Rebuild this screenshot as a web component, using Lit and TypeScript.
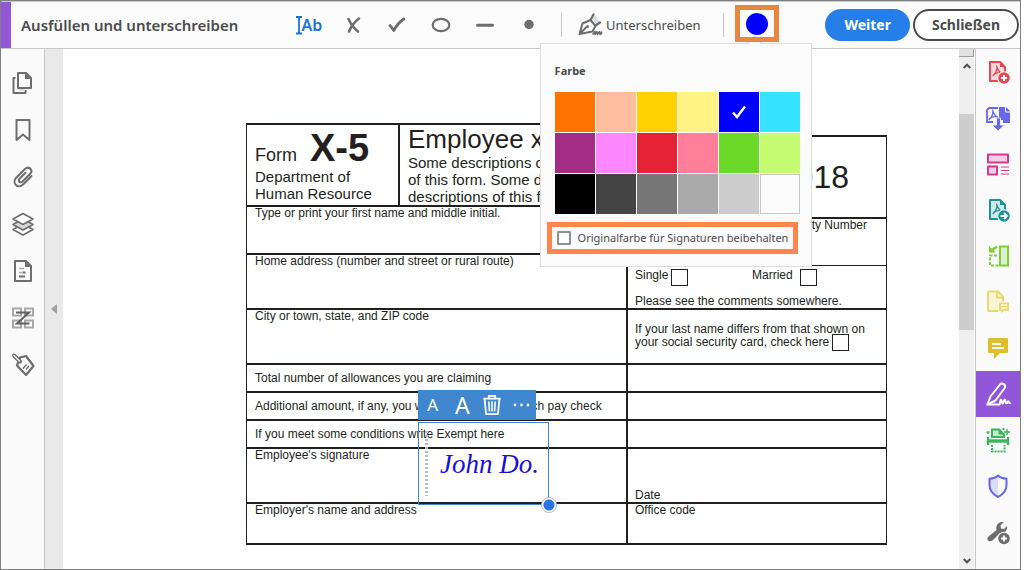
import { LitElement, html, css, svg } from "lit";
import { customElement, property, state } from "lit/decorators.js";
import { classMap } from "lit/directives/class-map.js";
import { styleMap } from "lit/directives/style-map.js";

const sheet = (stroke: string, fill: string) => svg`
  <path d="M4 2h10l5 5v14h-15z" fill=${fill} stroke=${stroke} stroke-width="2" stroke-linejoin="round"/>
  <path d="M14 2v5h5z" fill=${stroke}/>`;

const acrobat = (stroke: string) => svg`
  <path d="M10.500 6c1 3.500 2 6 5.500 7.500M10.800 7.500c.3 3-1.500 6-3.800 8.200M7.500 14.500c2-1.600 4.500-2.200 8-1.700" fill="none" stroke=${stroke} stroke-width="1.200" stroke-linecap="round"/>`;

const icons: Record<string, unknown> = {
  pages: svg`<g fill="none" stroke="#6e6e6e" stroke-width="2" stroke-linejoin="round">
    <path d="M7 2h8l5 5v10h-13z"/><path d="M4.500 7h-2v15h12v-3"/></g><path d="M14 2v6h6z" fill="#6e6e6e"/><path d="M8 18h6v2h-6z" fill="#ddd"/>`,
  bookmark: svg`<path d="M5.500 2h13v20l-6.500-5.500-6.500 5.500z" fill="none" stroke="#6e6e6e" stroke-width="2" stroke-linejoin="round"/>`,
  clip: svg`<path d="M20.500 11l-8.500 8.500c-5 5-11.500-1.500-7-6.500l9-9c4-3.500 8.500 1 5.200 4.800l-7.700 7.700c-2.400 2-5-.6-3-2.800l6-6" fill="none" stroke="#6e6e6e" stroke-width="2" stroke-linecap="round"/>`,
  layers: svg`<g stroke="#6e6e6e" stroke-width="1.600" stroke-linejoin="round"><path d="M12 12l10 5.500-10 5.500-10-5.500z" fill="#fff"/><path d="M12 7l10 5.500-10 5.500-10-5.500z" fill="#d8d8d8"/><path d="M12 1.500l10 5.500-10 5.500-10-5.500z" fill="#fff"/></g>`,
  content: svg`<path d="M4 2h11l5 5v15h-16z" fill="none" stroke="#6e6e6e" stroke-width="2" stroke-linejoin="round"/><path d="M14 2v6h6z" fill="#6e6e6e"/><path d="M8 9.500h5M8 13.500h3" stroke="#aaa" stroke-width="1.600"/><path d="M8 17.500h6M11.500 13.500h3" stroke="#6e6e6e" stroke-width="1.800"/>`,
  order: svg`<g fill="none" stroke="#a8a8a8" stroke-width="2"><path d="M2 2.500h8v7h-8zM14 2.500h8v7h-8zM2 14.500h8v7h-8zM14 14.500h8v7h-8z"/></g><path d="M5 6.500h13L6 17.500h12.500" fill="none" stroke="#606060" stroke-width="2"/>`,
  tag: svg`<path d="M9 4.500l6-1.500 7.500 10-7.500 9-9-9.500z" fill="none" stroke="#6e6e6e" stroke-width="2.200" stroke-linejoin="round"/><path d="M9 8.500L3 2.500" stroke="#6e6e6e" stroke-width="4" stroke-linecap="round"/><path d="M8.500 8L3 2.500" stroke="#fafafa" stroke-width="1.200" stroke-linecap="round"/><path d="M12 15.500l3.500-4M15 16.500l3-3.500" stroke="#6e6e6e" stroke-width="1.300"/>`,
  create: svg`${sheet("#e34850", "#f8d9db")}${acrobat("#e34850")}<circle cx="18" cy="18" r="6.800" fill="#fafafa"/><circle cx="18" cy="18" r="5.800" fill="#e34850"/><path d="M18 15v6M15 18h6" stroke="#fff" stroke-width="2"/>`,
  export: svg`<path d="M13 1h7l4 4v12h-7v-3h-4z" fill="#6767ec"/><path d="M19.500 1v5h4.500" fill="none" stroke="#fafafa" stroke-width="1"/><path d="M12 2h-9l-2 2v12h6" fill="none" stroke="#6767ec" stroke-width="1.800"/><g transform="translate(-4 -2)">${acrobat("#6767ec")}</g><path d="M10.500 12h4v7h4l-6.500 6-6-6h4.500z" fill="#6767ec" stroke="#fafafa" stroke-width=".8"/>`,
  organize: svg`<g fill="#f3d0e5" stroke="#d83790" stroke-width="2" stroke-linejoin="round"><path d="M2 2.500h20v8h-20zM2 14.500h9v8h-9z"/></g><path d="M15 15h8M15 18.500h8M15 22h8" stroke="#d83790" stroke-width="1.200"/>`,
  send: svg`${sheet("#1b9398", "#cfe8e9")}${acrobat("#1b9398")}<circle cx="18" cy="18" r="6.800" fill="#fafafa"/><circle cx="18" cy="18" r="5.800" fill="#1b9398"/><path d="M14.500 18h6M18 15l3 3-3 3" fill="none" stroke="#fff" stroke-width="1.800"/>`,
  rotate: svg`<path d="M14 2.500h8v19h-8z" fill="#dcf2ca" stroke="#7fcf37" stroke-width="2"/><path d="M11 11.500h-7v10h9" fill="none" stroke="#7fcf37" stroke-width="2" stroke-dasharray="3 1.500"/><path d="M11 2.500L5.500 6.500" stroke="#7fcf37" stroke-width="2.400"/><path d="M3 2v6.500h7z" fill="#7fcf37"/>`,
  note: svg`<path d="M2 1.500h10l5 5v14.500h-15z" fill="#fbf5d6" stroke="#e8d978" stroke-width="2" stroke-linejoin="round"/><path d="M11 1.500v6h6" fill="none" stroke="#e8d978" stroke-width="2"/><path d="M12.500 12h11v9.500h-6l-2.500 3v-3h-2.500z" fill="#e8d978" stroke="#fafafa"/><path d="M15 15.200h6M15 18h6" stroke="#fff" stroke-width="1.200"/>`,
  comment: svg`<path d="M3 2h18a1 1 0 0 1 1 1v13a1 1 0 0 1-1 1h-7l-6 6v-6h-5a1 1 0 0 1-1-1v-13a1 1 0 0 1 1-1z" fill="#dfbf2b"/><path d="M6 8h9M6 12h12" stroke="#fff" stroke-width="1.800"/>`,
  sign: svg`<path d="M1.500 22.500l3-8L14 2.500c2-2.500 6.500.5 4.700 3.500l-9.200 12.500z" fill="none" stroke="#fff" stroke-width="2" stroke-linejoin="round"/><path d="M1.500 22.500h12c1-1 .5-5 1.500-5s.5 4 1.800 4 .8-4 2-4 .4 3.800 1.800 3.800 .8-2 1.700-2 .5 2 1.700 2" fill="none" stroke="#fff" stroke-width="2" stroke-linecap="round"/>`,
  scan: svg`<path d="M6 9v-7.500h7l5 5v2.500z" fill="#c5ecd2" stroke="#3db35b" stroke-width="2"/><path d="M12.500 1.500v5h5z" fill="#3db35b"/><path d="M2 9v8M22 9v8" stroke="#3db35b" stroke-width="2.400"/><path d="M1 13h22" stroke="#3db35b" stroke-width="3.400"/><path d="M6 17v6.500h12.500V17" fill="none" stroke="#3db35b" stroke-width="2" stroke-dasharray="2 1"/><path d="M21 1v6M18 4h6M2 3v3M.5 4.500h3M17.500 0v2M16.500 1h2" stroke="#3db35b" stroke-width="1.400"/>`,
  shield: svg`<path d="M12 2.500V22c-5-2.500-8-7-8-12v-5c3 0 6-1 8-2.500z" fill="#dcdcfb"/><path d="M12 1.500c2 2 5 3 8.500 3.200V11c0 5-3.500 9.500-8.500 12-5-2.500-8.500-7-8.500-12V4.700c3.500-.2 6.500-1.200 8.500-3.200z" fill="none" stroke="#6767ec" stroke-width="2" stroke-linejoin="round"/>`,
  more: svg`<path d="M2 17l8.500-7c-1-4.500 2-9 7-7.800l-3 3.300.5 3 3 .5 3-3c.8 4.500-2.500 8-7 7l-7.500 7.500c-3 2-6.500-.5-4.500-3.500z" fill="#6e6e6e"/><circle cx="18" cy="18.500" r="6.800" fill="#fafafa"/><circle cx="18" cy="18.500" r="5.800" fill="#6e6e6e"/><path d="M18 15.500v6M15 18.500h6" stroke="#fff" stroke-width="1.800"/>`,
  text: svg`<path d="M0 4h6M0 20.500h6M3 4V20.500" stroke="#1b74d1" stroke-width="1.800" fill="none"/>`,
  cross: svg`<path d="M7.500 6c2 4.500 5 9 9.500 12.500M18 5.500c-4 3-8 8-10 13" fill="none" stroke="#6e6e6e" stroke-width="2.600" stroke-linecap="round"/>`,
  check: svg`<path d="M5 12.500l3.800 5c2.500-5 5.500-8.500 10-11.500" fill="none" stroke="#6e6e6e" stroke-width="2.800" stroke-linecap="round" stroke-linejoin="round"/>`,
  ellipse: svg`<ellipse cx="12" cy="12" rx="8.300" ry="6.200" fill="none" stroke="#6e6e6e" stroke-width="2.200"/>`,
  line: svg`<path d="M4.500 12.200h15" stroke="#6e6e6e" stroke-width="3" stroke-linecap="round"/>`,
  dot: svg`<circle cx="12" cy="11.500" r="4.700" fill="#6e6e6e"/>`,
  nib: svg`<path d="M13.500 4.500l3.500-2.500 4.500 7-4 2z" fill="#dcdcdc"/><path d="M1.500 21L4.500 10.500 12.500 7l5 6-3 5.500zM2 20.500l6.500-6.500" fill="none" stroke="#6e6e6e" stroke-width="2" stroke-linejoin="round"/><circle cx="9.500" cy="13.500" r="1.500" fill="#6e6e6e"/><path d="M12.500 7l3-5.500M17.500 12.500l4.500-3" stroke="#6e6e6e" stroke-width="2.200" stroke-linecap="round"/><path d="M14.500 21.500l2.500-3v3l2-3 .5 3 2-3 .5 3 1.500-2.500v2.500" fill="none" stroke="#6e6e6e" stroke-width="1.500" stroke-linejoin="round"/>`,
  trash: svg`<path d="M2.500 5h19M8.500 4.500V2h7v2.500M4 6l1.500 16h13L20 6" fill="none" stroke="#fff" stroke-width="2" stroke-linejoin="round"/><path d="M8.500 8l.7 11M12 8v11M15.500 8l-.7 11" stroke="#fff" stroke-width="1.700"/>`,
  dots: svg`<g fill="#fff"><circle cx="6" cy="12" r="1.400"/><circle cx="12.500" cy="12" r="1.400"/><circle cx="19" cy="12" r="1.400"/></g>`,
};

@customElement("ui-icon")
class UiIcon extends LitElement {
  @property() name = "";
  @property({ type: Number }) size = 24;
  static styles = css`
    :host { display: inline-flex; }
    svg { display: block; overflow: visible; }
  `;
  render() {
    return html`<svg width=${this.size} height=${this.size} viewBox="0 0 24 24" aria-hidden="true">${icons[this.name]}</svg>`;
  }
}

@customElement("icon-rail")
class IconRail extends LitElement {
  @property({ attribute: false }) items: [string, string][] = [];
  @property() active = "";
  static styles = css`
    :host { display: flex; flex-direction: column; width: 44px; flex: none; background: #fafafa; }
    button { display: flex; align-items: center; justify-content: center; height: var(--cell, 46px); padding: 0; border: 0; background: none; }
    .active { background: #9256d9; }
  `;
  render() {
    return this.items.map(([icon, label]) => html`
      <button class=${classMap({ active: icon === this.active })} aria-label=${label}><ui-icon name=${icon}></ui-icon></button>`);
  }
}

@customElement("color-popup")
class ColorPopup extends LitElement {
  @state() selected = "#0000ff";
  colors = [
    "#ff7300", "#ffbf9f", "#ffd100", "#fff385", "#0000ff", "#37e4ff",
    "#a32d84", "#fd87ff", "#e62237", "#ff7f9b", "#6cd928", "#c4fb70",
    "#000000", "#444444", "#777777", "#aaaaaa", "#cccccc", "#fcfcfc",
  ];
  static styles = css`
    :host { display: block; box-sizing: border-box; width: 272px; padding: 20px 10px 12px 14px; background: #fbfbfb; border: 1px solid #dfdfdf; color: #4b4b4b; font: 11px/14px "Noto Sans", sans-serif; }
    :host::before { content: ""; position: absolute; left: 208px; top: -6px; width: 10px; height: 10px; background: #fbfbfb; border: solid #c8c8c8; border-width: 1px 0 0 1px; transform: rotate(45deg); }
    h2 { margin: 0 0 14px; font: 700 11px/14px "Noto Sans", sans-serif; }
    .grid { display: grid; grid-template-columns: repeat(6, 40px); grid-auto-rows: 40px; gap: 1px; }
    .swatch { display: flex; align-items: center; justify-content: center; padding: 0; border: 0; }
    .outlined { border: 1px solid #c8c8c8; }
    .keep { display: flex; align-items: center; gap: 7px; margin: 8px 3px 0 -8px; padding: 0 5px; height: 22px; border: 5px solid #ff864a; white-space: nowrap; }
    input { appearance: none; flex: none; box-sizing: border-box; width: 14px; height: 14px; margin: 0; border: 2px solid #909090; border-radius: 1px; background: #fff; }
  `;
  render() {
    return html`
      <h2>Farbe</h2>
      <div class="grid">
        ${this.colors.map((c, i) => html`
          <button class=${classMap({ swatch: true, outlined: i === 17 })} style=${styleMap({ background: c })}
            aria-label=${c} @click=${() => (this.selected = c)}>
            ${c === this.selected ? html`<svg width="16" height="16" viewBox="0 0 16 16"><path d="M2 8.500l4 4.500L14 2.500" fill="none" stroke="#fff" stroke-width="2.400"/></svg>` : ""}
          </button>`)}
      </div>
      <label class="keep"><input type="checkbox" />Originalfarbe für Signaturen beibehalten</label>
    `;
  }
}

@customElement("signature-box")
class SignatureBox extends LitElement {
  static styles = css`
    :host { display: flex; flex-direction: column; align-items: flex-start; gap: 2px; }
    .bar { display: grid; grid-template-columns: repeat(4, 1fr); align-items: center; justify-items: center; width: 118px; height: 30px; background: #3f87cf; }
    button { display: flex; padding: 0; border: 0; background: none; color: #fff; font: 17px/24px "Noto Sans", sans-serif; }
    .large { font-size: 23px; }
    .box { position: relative; display: flex; align-items: center; gap: 12px; box-sizing: border-box; width: 131px; height: 83px; padding: 8px 6px; border: 1px solid #3f87cf; }
    .grip { align-self: stretch; width: 3px; background: repeating-linear-gradient(#bdbdbd 0 2px, transparent 2px 4px); }
    .name { color: #1b0fd8; font: italic 27px/32px "Liberation Serif", cursive; white-space: nowrap; }
    .handle { position: absolute; right: -9px; bottom: -9px; box-sizing: border-box; width: 16px; height: 16px; border: 1px solid #bbb; border-radius: 50%; background: radial-gradient(#2a74e4 0 5px, #fff 6px); }
  `;
  render() {
    return html`
      <div class="bar">
        <button aria-label="Kleiner">A</button>
        <button class="large" aria-label="Größer">A</button>
        <button aria-label="Löschen"><ui-icon name="trash" size="22"></ui-icon></button>
        <button aria-label="Mehr"><ui-icon name="dots"></ui-icon></button>
      </div>
      <div class="box"><span class="grip"></span><span class="name">John Do.</span><span class="handle"></span></div>
    `;
  }
}

@customElement("paper-form")
class PaperForm extends LitElement {
  static styles = css`
    :host { position: relative; display: flex; align-items: flex-start; color: #231f20; font: 12px/13px "Liberation Sans", Arial, sans-serif; white-space: nowrap; }
    .left { flex: 0 0 379px; border: solid #231f20; border-width: 2px 2px 0 1px; }
    .right { flex: 1; margin-top: 12px; border: solid #231f20; border-width: 2px 1px 0 0; }
    .cell { box-sizing: border-box; padding: 0 7px; border-bottom: 2px solid #231f20; }
    .thin { border-bottom-width: 1px; }
    .h28 { height: 28px; display: flex; align-items: center; }
    .h41 { height: 41px; }
    .h44 { height: 44px; display: flex; flex-direction: column; justify-content: space-between; padding-top: 3px; }
    .h47 { height: 47px; }
    .h48 { height: 48px; }
    .h55 { height: 55px; }
    .left .cell { padding-left: 8px; }
    .left .head { display: flex; height: 82px; padding: 0; }
    .id { box-sizing: border-box; flex: 0 0 153px; padding: 3px 8px 0; border-right: 2px solid #231f20; }
    .about { padding-left: 8px; }
    .form-no { display: flex; align-items: baseline; gap: 13px; height: 40px; font-size: 18px; line-height: 20px; }
    .form-no b { font-size: 38px; line-height: 40px; }
    .body { font-size: 15px; line-height: 17px; }
    .title { margin-bottom: 1px; font-size: 26px; line-height: 28px; }
    .year { height: 82px; padding: 22px 37px 0; text-align: right; font-size: 32px; line-height: 36px; }
    .ssn { text-align: right; padding-right: 19px; }
    .status { display: grid; grid-template-columns: 117px auto; }
    .status label { display: flex; align-items: flex-start; gap: 3px; }
    .status .married { gap: 7px; }
    .name { padding-top: 13px; }
    .bottom { display: flex; align-items: flex-end; }
    input { appearance: none; box-sizing: border-box; width: 17px; height: 17px; margin: 0; border: 1px solid #231f20; background: #fff; }
    .name input { margin: -2px 0; vertical-align: top; }
    signature-box { position: absolute; left: 172px; top: 267px; }
  `;
  render() {
    return html`
      <div class="left">
        <div class="cell head">
          <div class="id">
            <div class="form-no"><span>Form</span><b>X-5</b></div>
            <div class="body">Department of<br />Human Resource</div>
          </div>
          <div class="about">
            <div class="title">Employee x-5</div>
            <div class="body">Some descriptions of<br />of this form. Some descr<br />descriptions of this form</div>
          </div>
        </div>
        <div class="cell h48">Type or print your first name and middle initial.</div>
        <div class="cell h55">Home address (number and street or rural route)</div>
        <div class="cell h55">City or town, state, and ZIP code</div>
        <div class="cell h28">Total number of allowances you are claiming</div>
        <div class="cell h28">Additional amount, if any, you want withheld from each pay check</div>
        <div class="cell h28">If you meet some conditions write Exempt here</div>
        <div class="cell h55">Employee's signature</div>
        <div class="cell h41">Employer's name and address</div>
      </div>
      <div class="right">
        <div class="cell year">2018</div>
        <div class="cell thin h47 ssn">Social Security Number</div>
        <div class="cell h44">
          <div class="status">
            <label>Single<input type="checkbox" /></label>
            <label class="married">Married<input type="checkbox" /></label>
          </div>
          <div>Please see the comments somewhere.</div>
        </div>
        <div class="cell h55 name"><label>If your last name differs from that shown on<br />your social security card, check here <input type="checkbox" /></label></div>
        <div class="cell h28"></div>
        <div class="cell h28"></div>
        <div class="cell h28"></div>
        <div class="cell h55 bottom">Date</div>
        <div class="cell h41">Office code</div>
      </div>
      <signature-box></signature-box>
    `;
  }
}

@customElement("app-root")
class AppRoot extends LitElement {
  static styles = css`
    :host { display: block; box-sizing: border-box; height: 100vh; padding-right: 5px; background: #fff; font-family: "Noto Sans", sans-serif; color: #4b4b4b; }
    .window { display: flex; flex-direction: column; box-sizing: border-box; height: 100%; border: 1px solid #808080; }
    header { display: flex; align-items: center; box-sizing: border-box; height: 48px; padding-right: 1px; background: #fbfbfb; border: solid #c8c8c8; border-width: 1px 0; white-space: nowrap; }
    .accent { align-self: stretch; width: 10px; background: #9256d9; }
    h1 { flex: 0 0 266px; margin: 0 0 0 10px; font-size: 15px; line-height: 20px; font-weight: 600; }
    button { padding: 0; border: 0; background: none; font-family: inherit; color: inherit; }
    .tools { display: grid; grid-template-columns: repeat(6, 44px); }
    .tools button { display: flex; align-items: center; justify-content: center; height: 32px; }
    .tools .ab { color: #1b74d1; font-size: 16px; line-height: 24px; font-weight: 600; }
    .ab ui-icon { width: 6px; overflow: visible; }
    .sep { width: 1px; height: 24px; background: #c8c8c8; margin: 0 16px 0 10px; }
    .sign { display: flex; align-items: center; gap: 4px; font-size: 13px; line-height: 20px; }
    .sep2 { margin: 0 11px 0 22px; }
    .color { position: relative; z-index: 1; align-self: flex-start; margin-top: 3px; }
    .swatch { display: flex; align-items: center; justify-content: center; box-sizing: border-box; width: 44px; height: 37px; border: 5px solid #e8873d; }
    .swatch span { width: 22px; height: 22px; border-radius: 50%; background: #00f; }
    .swatch-wrap { position: relative; z-index: 2; }
    color-popup { position: absolute; left: -195px; top: 38px; }
    .end { display: flex; gap: 3px; margin-left: auto; }
    .pill { box-sizing: border-box; height: 32px; padding: 0 17px; border: 2px solid #4b4b4b; border-radius: 16px; background: #fff; font-size: 14px; line-height: 20px; font-weight: 700; }
    .primary { border-color: #267fe8; background: #267fe8; color: #fff; }
    main { display: flex; flex: 1; min-height: 0; }
    .left-rail { --cell: 47px; box-sizing: border-box; width: 43px; padding-top: 10px; }
    .gutter { display: flex; align-items: center; justify-content: flex-start; box-sizing: border-box; width: 19px; padding-left: 6px; background: #e9e9e9; border-left: 1px solid #c8c8c8; }
    .canvas { flex: 1; min-width: 0; padding: 74px 72px 0 183px; background: #fff; overflow: hidden; }
    .scroll { display: flex; flex-direction: column; align-items: center; width: 15px; margin-right: 1px; background: #efefef; }
    .split { align-self: stretch; box-sizing: border-box; height: 8px; background: #e2e2e2; border: solid #a0a0a0; border-width: 0 1px 1px 0; }
    .arrow { display: flex; align-items: center; height: 17px; }
    .thumb { align-self: stretch; height: 216px; margin: 40px 0 auto; background: #cdcdcd; }
    .right-rail { border-left: 1px solid #c8c8c8; }
  `;
  left: [string, string][] = [["pages", "Seiten"], ["bookmark", "Lesezeichen"], ["clip", "Anlagen"], ["layers", "Ebenen"], ["content", "Inhalt"], ["order", "Reihenfolge"], ["tag", "Tags"]];
  right: [string, string][] = [["create", "PDF erstellen"], ["export", "PDF exportieren"], ["organize", "Seiten verwalten"], ["send", "Senden"], ["rotate", "Seiten drehen"], ["note", "Notiz"], ["comment", "Kommentieren"], ["sign", "Unterschreiben"], ["scan", "Scannen"], ["shield", "Schützen"], ["more", "Weitere Werkzeuge"]];
  render() {
    return html`
      <div class="window">
        <header>
          <span class="accent"></span>
          <h1>Ausfüllen und unterschreiben</h1>
          <div class="tools">
            <button class="ab"><ui-icon name="text"></ui-icon>Ab</button>
            ${["cross", "check", "ellipse", "line", "dot"].map((n) => html`<button aria-label=${n}><ui-icon name=${n}></ui-icon></button>`)}
          </div>
          <span class="sep"></span>
          <button class="sign"><ui-icon name="nib"></ui-icon>Unterschreiben</button>
          <span class="sep sep2"></span>
          <div class="color">
            <color-popup></color-popup>
            <div class="swatch-wrap"><button class="swatch" aria-label="Farbe"><span></span></button></div>
          </div>
          <div class="end"><button class="pill primary">Weiter</button><button class="pill">Schließen</button></div>
        </header>
        <main>
          <icon-rail class="left-rail" .items=${this.left}></icon-rail>
          <div class="gutter"><svg width="6" height="10" viewBox="0 0 6 10"><path d="M6 0v10L0 5z" fill="#a0a0a0"/></svg></div>
          <div class="canvas"><paper-form></paper-form></div>
          <div class="scroll">
            <span class="split"></span>
            <span class="arrow"><svg width="8" height="6" viewBox="0 0 8 6"><path d="M.7 5L4 1.700 7.300 5" fill="none" stroke="#505050" stroke-width="2"/></svg></span>
            <span class="thumb"></span>
            <span class="arrow"><svg width="8" height="6" viewBox="0 0 8 6"><path d="M.7 1L4 4.300 7.300 1" fill="none" stroke="#505050" stroke-width="2"/></svg></span>
          </div>
          <icon-rail class="right-rail" .items=${this.right} active="sign"></icon-rail>
        </main>
      </div>
    `;
  }
}
